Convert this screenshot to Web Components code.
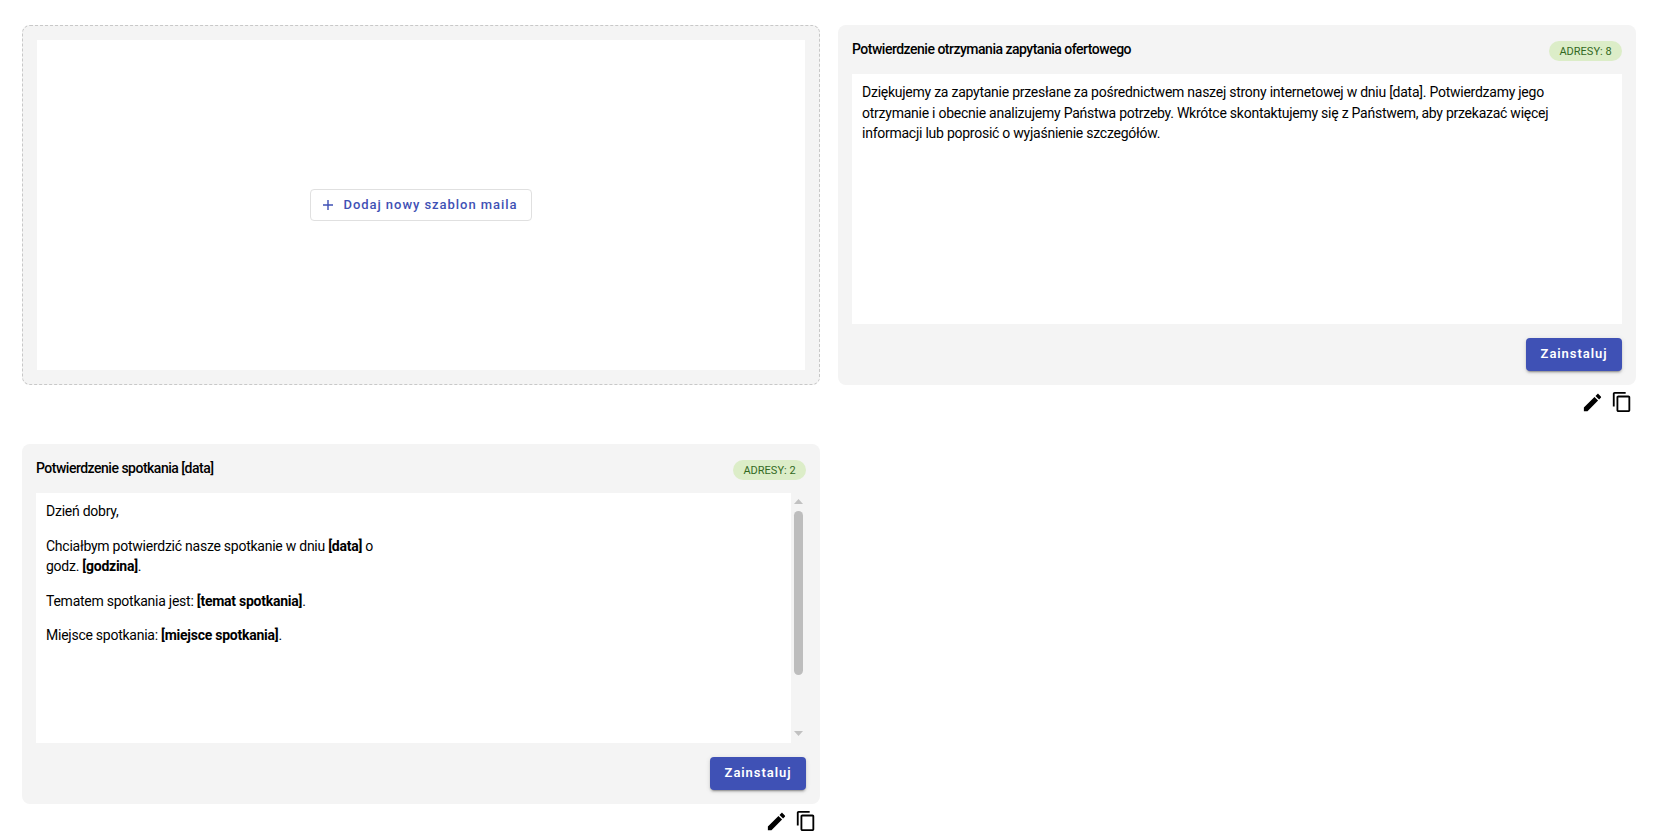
<!DOCTYPE html>
<html lang="pl">
<head>
<meta charset="utf-8">
<title>Szablony maili</title>
<style>
    html, body {
        margin: 0;
        background: #fff;
        font-family: Roboto, "Liberation Sans", sans-serif;
        color: #000;
    }
</style>
</head>
<body>
<template-list>
    <add-template-card></add-template-card>

    <mail-template title="Potwierdzenie otrzymania zapytania ofertowego" addresses="8">
        <p>Dziękujemy za zapytanie przesłane za pośrednictwem naszej strony internetowej w dniu [data]. Potwierdzamy jego otrzymanie i obecnie analizujemy Państwa potrzeby. Wkrótce skontaktujemy się z Państwem, aby przekazać więcej informacji lub poprosić o wyjaśnienie szczegółów.</p>
    </mail-template>

    <mail-template title="Potwierdzenie spotkania [data]" addresses="2" scrolls>
        <p>Dzień dobry,</p>
        <p>Chciałbym potwierdzić nasze spotkanie w dniu <b>[data]</b> o<br>godz. <b>[godzina]</b>.</p>
        <p>Tematem spotkania jest: <b>[temat spotkania]</b>.</p>
        <p>Miejsce spotkania: <b>[miejsce spotkania]</b>.</p>
    </mail-template>
</template-list>

<script>
class TemplateList extends HTMLElement {
    constructor() {
        super();
        this.attachShadow({ mode: 'open' });
        this.shadowRoot.innerHTML = `
            <style>
                :host {
                    display: grid;
                    grid-template-columns: 798px 798px;
                    column-gap: 18px;
                    row-gap: 30px;
                    align-items: start;
                    padding: 25px 26px 0 22px;
                }
            </style>
            <slot></slot>
        `;
    }
}

class AddressChip extends HTMLElement {
    constructor() {
        super();
        this.attachShadow({ mode: 'open' });
        this.shadowRoot.innerHTML = `
            <style>
                :host {
                    display: inline-flex;
                    align-items: center;
                    justify-content: center;
                    height: 20px;
                    width: 73px;
                    border-radius: 10px;
                    background-color: #dcedc8;
                    color: #33691e;
                    font-size: 11px;
                    white-space: nowrap;
                }
            </style>
            <slot></slot>
        `;
    }
}

class InstallButton extends HTMLElement {
    constructor() {
        super();
        this.attachShadow({ mode: 'open' });
        this.shadowRoot.innerHTML = `
            <style>
                :host {
                    display: inline-flex;
                    align-items: center;
                    justify-content: center;
                    box-sizing: border-box;
                    width: 96px;
                    height: 33px;
                    padding-bottom: 3px;
                    border-radius: 4px;
                    background-color: #3f51b5;
                    color: #fff;
                    font-size: 13px;
                    font-weight: 600;
                    letter-spacing: 0.93px;
                    box-shadow: 0 3px 1px -2px rgba(0,0,0,.2), 0 2px 2px 0 rgba(0,0,0,.14), 0 1px 5px 0 rgba(0,0,0,.12);
                }
            </style>
            <slot></slot>
        `;
    }
}

class AddTemplateCard extends HTMLElement {
    constructor() {
        super();
        this.attachShadow({ mode: 'open' });
        this.shadowRoot.innerHTML = `
            <style>
                :host {
                    display: block;
                    box-sizing: border-box;
                    height: 360px;
                    padding: 14px;
                    background-color: #f4f4f4;
                    border: 1px dashed #c8c8c8;
                    border-radius: 8px;
                }

                .area {
                    display: flex;
                    align-items: center;
                    justify-content: center;
                    height: 100%;
                    background-color: #fff;
                }

                .add-button {
                    display: flex;
                    align-items: center;
                    gap: 10px;
                    box-sizing: border-box;
                    height: 32px;
                    padding: 0 13px 2px 12px;
                    background-color: #fff;
                    border: 1px solid #e0e0e0;
                    border-radius: 4px;
                    color: #3f51b5;
                    font-size: 13px;
                    font-weight: 500;
                    letter-spacing: 0.95px;
                    white-space: nowrap;
                }

                svg {
                    display: block;
                    width: 10px;
                    height: 10px;
                    margin-top: 2px;
                    fill: currentColor;
                }
            </style>
            <div class="area">
                <div class="add-button">
                    <svg viewBox="5 5 14 14"><path d="M19 13h-6v6h-2v-6H5v-2h6V5h2v6h6v2z"/></svg>
                    <span>Dodaj nowy szablon maila</span>
                </div>
            </div>
        `;
    }
}

// Scrollbars are hidden in the photo, so this one is drawn by hand
class FakeScrollbar extends HTMLElement {
    constructor() {
        super();
        this.attachShadow({ mode: 'open' });
        this.shadowRoot.innerHTML = `
            <style>
                :host {
                    display: flex;
                    flex-direction: column;
                    align-items: center;
                    flex: none;
                    width: 15px;
                }

                .arrow {
                    display: block;
                    flex: none;
                    width: 9px;
                    height: 5px;
                    fill: #c1c1c1;
                }

                .up {
                    margin: 6px 0 7px;
                }

                .down {
                    margin: 0 0 7px;
                }

                .track {
                    flex: 1;
                    width: 9px;
                }

                .thumb {
                    height: 164px;
                    background-color: #bdbdbd;
                    border-radius: 5px;
                }
            </style>
            <svg class="arrow up" viewBox="0 0 9 5"><path d="M0 5h9L4.500 0z"/></svg>
            <div class="track"><div class="thumb"></div></div>
            <svg class="arrow down" viewBox="0 0 9 5"><path d="M0 0h9L4.500 5z"/></svg>
        `;
    }
}

class MailTemplate extends HTMLElement {
    constructor() {
        super();
        this.attachShadow({ mode: 'open' });
    }

    connectedCallback() {
        this.render();
    }

    render() {
        const title = this.getAttribute('title');
        const addresses = this.getAttribute('addresses');

        this.shadowRoot.innerHTML = `
            <style>
                :host {
                    display: block;
                }

                .card {
                    display: flex;
                    flex-direction: column;
                    box-sizing: border-box;
                    height: 360px;
                    padding: 0 14px 14px;
                    background-color: #f4f4f4;
                    border-radius: 8px;
                }

                .header {
                    display: flex;
                    align-items: center;
                    justify-content: space-between;
                    height: 49px;
                    flex: none;
                }

                .title {
                    margin-bottom: 2px;
                    font-size: 14px;
                    font-weight: 500;
                    letter-spacing: -0.5px;
                }

                address-chip {
                    margin-top: 3px;
                }

                .content {
                    display: flex;
                    height: 250px;
                    flex: none;
                }

                .body {
                    flex: 1;
                    min-width: 0;
                    box-sizing: border-box;
                    padding: 8px 60px 8px 10px;
                    background-color: #fff;
                    font-size: 14px;
                    line-height: 20.5px;
                    letter-spacing: -0.25px;
                    overflow: hidden;
                }

                ::slotted(p) {
                    margin: 0 0 14px;
                }

                .footer {
                    display: flex;
                    justify-content: flex-end;
                    margin-top: 14px;
                }

                .actions {
                    display: flex;
                    justify-content: flex-end;
                    gap: 7px;
                    padding: 6px 3px 0 0;
                }

                .actions svg {
                    display: block;
                    fill: #000;
                }
            </style>
            <div class="card">
                <div class="header">
                    <span class="title">${title}</span>
                    <address-chip>ADRESY: ${addresses}</address-chip>
                </div>
                <div class="content">
                    <div class="body"><slot></slot></div>
                    ${this.hasAttribute('scrolls') ? '<fake-scrollbar></fake-scrollbar>' : ''}
                </div>
                <div class="footer">
                    <install-button>Zainstaluj</install-button>
                </div>
            </div>
            <div class="actions">
                <svg width="23" height="23" viewBox="0 0 24 24"><path d="M3 17.25V21h3.75L17.81 9.94l-3.75-3.75L3 17.25zM20.71 7.04c.39-.39.39-1.02 0-1.41l-2.34-2.34c-.39-.39-1.02-.39-1.41 0l-1.83 1.83 3.75 3.75 1.83-1.83z"/></svg>
                <svg width="22" height="22" viewBox="0 0 24 24"><path d="M16 1H4c-1.100 0-2 .9-2 2v14h2V3h12V1zm3 4H8c-1.100 0-2 .9-2 2v14c0 1.100.9 2 2 2h11c1.100 0 2-.9 2-2V7c0-1.100-.9-2-2-2zm0 16H8V7h11v14z"/></svg>
            </div>
        `;
    }
}

customElements.define('template-list', TemplateList);
customElements.define('address-chip', AddressChip);
customElements.define('install-button', InstallButton);
customElements.define('add-template-card', AddTemplateCard);
customElements.define('fake-scrollbar', FakeScrollbar);
customElements.define('mail-template', MailTemplate);
</script>
</body>
</html>
